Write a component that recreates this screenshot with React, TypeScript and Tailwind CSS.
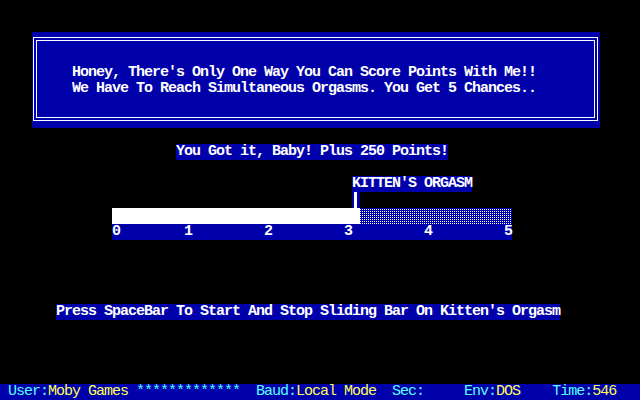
import React from "react";

const BLUE = "bg-[#0000aa]";

function Cell({ children, className = "" }: { children: React.ReactNode; className?: string }) {
  return (
    <div className={`h-4 leading-4 whitespace-pre ${className}`}>{children}</div>
  );
}

export default function App() {
  const scale = "0        1         2         3         4         5";
  return (
    <div
      className="w-[640px] h-[400px] bg-black text-white flex flex-col overflow-hidden text-[15px] tracking-[-1px] font-bold"
      style={{ fontFamily: '"Liberation Mono", "DejaVu Sans Mono", monospace' }}
    >
      {/* message box with double-line frame */}
      <div className={`mt-8 ml-8 w-[568px] h-24 ${BLUE} pt-[5px] pl-px pr-[2px] pb-[7px]`}>
        <div className="h-full border border-white p-[2px]">
          <div className="h-full border border-white pl-[35px] pt-[24px]">
            <Cell>Honey, There's Only One Way You Can Score Points With Me!!</Cell>
            <Cell>We Have To Reach Simultaneous Orgasms. You Get 5 Chances..</Cell>
          </div>
        </div>
      </div>

      <div className="mt-4 ml-[176px] flex">
        <Cell className={`${BLUE} w-[272px]`}>You Got it, Baby! Plus 250 Points!</Cell>
      </div>

      <div className="mt-4 ml-[352px] flex">
        <Cell className={`${BLUE} w-[120px]`}>KITTEN'S ORGASM</Cell>
      </div>

      {/* marker above the slider */}
      <div className="ml-[352px] flex">
        <div className={`w-2 h-4 ${BLUE} pl-[2px]`}>
          <div className="w-[3px] h-4 bg-white" />
        </div>
      </div>

      {/* slider bar */}
      <div className="ml-28 flex h-4 w-[400px]">
        <div className="w-[248px] h-4 bg-white" />
        <div className="flex-1 h-4 bg-[linear-gradient(#0000aa_50%,transparent_50%),linear-gradient(90deg,#ffffff_50%,#0000aa_50%)] bg-[length:2px_2px]" />
      </div>
      <div className="ml-28 flex w-[400px]">
        <Cell className={`${BLUE} w-[400px]`}>{scale}</Cell>
      </div>

      <div className="mt-16 ml-14 flex">
        <Cell className={`${BLUE} w-[504px]`}>Press SpaceBar To Start And Stop Sliding Bar On Kitten's Orgasm</Cell>
      </div>

      {/* status line */}
      <div className={`mt-16 h-4 w-full ${BLUE} pl-2`}>
        <Cell className="font-normal">
          <span className="text-[#55ffff]">User:</span>
          <span className="text-[#ffff55]">Moby Games</span>
          <span className="text-[#55ffff]"> *************  Baud:</span>
          <span className="text-[#ffff55]">Local Mode</span>
          <span className="text-[#55ffff]">  Sec:     Env:</span>
          <span className="text-[#ffff55]">DOS</span>
          <span className="text-[#55ffff]">    Time:</span>
          <span className="text-[#ffff55]">546</span>
        </Cell>
      </div>
    </div>
  );
}
